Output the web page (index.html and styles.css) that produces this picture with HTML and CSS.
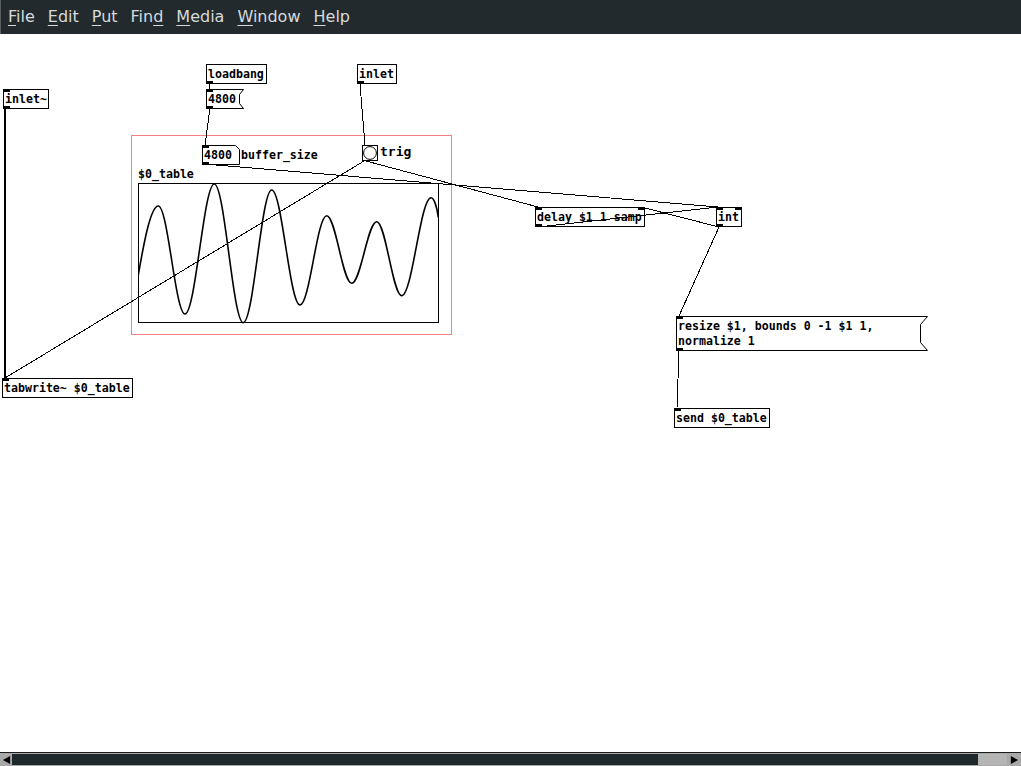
FILE: index.html
```html
<!DOCTYPE html>
<html>
<head>
<meta charset="utf-8">
<title>Pd patch</title>
<link rel="stylesheet" href="styles.css">
</head>
<body>
<div class="window">
  <nav class="menubar">
    <span class="menu"><u>F</u>ile</span>
    <span class="menu"><u>E</u>dit</span>
    <span class="menu"><u>P</u>ut</span>
    <span class="menu">Fin<u>d</u></span>
    <span class="menu"><u>M</u>edia</span>
    <span class="menu"><u>W</u>indow</span>
    <span class="menu"><u>H</u>elp</span>
  </nav>

  <main class="canvas">
    <div class="gop"></div>
    <div class="label l-table">$0_table</div>
    <svg class="graph" viewBox="138 183 301 141">
      <rect x="138.5" y="183.5" width="300" height="139" fill="#fff" stroke="#000" stroke-width="1"/>
      <path d="M138.3,275 C143.5,245 150.5,206 158.3,206 C168,206 175.3,314 185,314 C195.6,314 203.7,184 214.3,184 C224.8,184 232.8,322.7 243.3,322.7 C253.6,322.7 261.4,190 271.7,190 C282,190 289.7,305 300,305 C309.7,305 317,215.7 326.7,215.7 C335.8,215.7 342.6,283.3 351.7,283.3 C360.8,283.3 367.6,221.7 376.7,221.7 C385.8,221.7 392.6,295.7 401.7,295.7 C412.3,295.7 420.4,197.7 431,197.7 C434,197.7 437,207 438.3,217.3" fill="none" stroke="#000" stroke-width="1.6"/>
    </svg>

    <div class="obj n-inletsig">inlet~<i class="io in l"></i><i class="io out l"></i></div>
    <div class="obj n-loadbang">loadbang<i class="io out l"></i></div>
    <div class="obj n-inlet">inlet<i class="io out l"></i></div>

    <div class="shape n-msg4800">
      <svg class="outline" viewBox="0 0 38 20"><polygon points="0.5,0.5 37.5,0.5 33.5,5.5 33.5,14.5 37.5,19.5 0.5,19.5" fill="#fff" stroke="#000" stroke-width="1"/></svg>
      <span class="txt">4800</span><i class="io in l"></i><i class="io out l"></i>
    </div>

    <div class="shape n-num">
      <svg class="outline" viewBox="0 0 38 20"><polygon points="0.5,0.5 33.5,0.5 37.5,4.5 37.5,19.5 0.5,19.5" fill="#fff" stroke="#000" stroke-width="1"/></svg>
      <span class="txt">4800</span><i class="io in l"></i><i class="io out l"></i>
    </div>
    <div class="label l-buffer">buffer_size</div>

    <div class="bang">
      <svg viewBox="0 0 16 16"><circle cx="8" cy="8" r="6.4" fill="#fff" stroke="#000" stroke-width="1"/></svg>
    </div>
    <div class="label l-trig">trig</div>

    <div class="obj n-delay">delay $1 1 samp<i class="io in l"></i><i class="io in r"></i><i class="io out l"></i></div>
    <div class="obj n-int">int<i class="io in l"></i><i class="io in r"></i><i class="io out l"></i></div>

    <div class="shape n-resize">
      <svg class="outline" viewBox="0 0 252 35"><polygon points="0.5,0.5 251.5,0.5 244.5,8.5 244.5,26.5 251.5,34.5 0.5,34.5" fill="#fff" stroke="#000" stroke-width="1"/></svg>
      <span class="txt two">resize $1, bounds 0 -1 $1 1,
normalize 1</span><i class="io in l"></i><i class="io out l"></i>
    </div>

    <div class="obj n-send">send $0_table<i class="io in l"></i></div>
    <div class="obj n-tabwrite">tabwrite~ $0_table<i class="io in l"></i></div>

    <svg class="wires" viewBox="0 34 1021 718">
      <g stroke="#000" stroke-width="1" fill="none" shape-rendering="crispEdges">
        <line x1="209.5" y1="84" x2="209.5" y2="89"/>
        <line x1="210" y1="108" x2="205" y2="145"/>
        <line x1="360" y1="84" x2="365" y2="145"/>
        <line x1="364" y1="161" x2="5" y2="378"/>
        <line x1="366" y1="161" x2="538" y2="207"/>
        <line x1="204" y1="164" x2="718" y2="207"/>
        <line x1="538" y1="227" x2="718" y2="207"/>
        <line x1="719" y1="227" x2="641" y2="207"/>
        <line x1="719" y1="227" x2="679" y2="316"/>
        <line x1="679" y1="350" x2="677" y2="408"/>
      </g>
      <line x1="5" y1="108" x2="5" y2="378" stroke="#000" stroke-width="2" shape-rendering="crispEdges"/>
    </svg>
  </main>

  <div class="hscroll">
    <div class="arrow">
      <svg viewBox="0 0 10 10"><polygon points="1,5 9,0.5 9,9.5" fill="#000"/></svg>
    </div>
    <div class="trough"></div>
    <div class="thumb"></div>
    <div class="arrow right">
      <svg viewBox="0 0 10 10"><polygon points="9,5 1,0.5 1,9.5" fill="#000"/></svg>
    </div>
  </div>
</div>
</body>
</html>
```

FILE: styles.css
```css
* { box-sizing: border-box; }

html, body {
  margin: 0;
  padding: 0;
  background: #fff;
}

body {
  width: 1021px;
  height: 766px;
  overflow: hidden;
}

.window {
  display: grid;
  grid-template-rows: 34px 1fr 14px;
  height: 766px;
}

/* ---------- menu bar ---------- */
.menubar {
  display: flex;
  gap: 13px;
  padding-left: 7px;
  background: #232a2e;
  border-left: 1px solid #596165;
  color: #d6dadd;
  font: 16px/34px "DejaVu Sans", sans-serif;
}

.menu u {
  text-decoration: underline;
  text-underline-offset: 3px;
  text-decoration-thickness: 1px;
}

/* ---------- canvas ---------- */
.canvas {
  position: relative;
  overflow: hidden;
  background: #fff;
}

.obj {
  position: absolute;
  height: 20px;
  border: 1px solid #000;
  background: #fff;
  padding: 0 1px;
  font: bold 11.6px/18px "DejaVu Sans Mono", monospace;
  color: #000;
  white-space: pre;
}

.shape {
  position: absolute;
  height: 20px;
  font: bold 11.6px/18px "DejaVu Sans Mono", monospace;
  color: #000;
}

.shape .outline {
  position: absolute;
  left: 0;
  top: 0;
  width: 100%;
  height: 100%;
}

.shape .txt {
  position: absolute;
  left: 0;
  top: 0;
  padding: 1px 0 0 2px;
  white-space: pre;
}

.shape .txt.two {
  padding-top: 3px;
  line-height: 15px;
}

.io {
  position: absolute;
  width: 7px;
  height: 3px;
  background: #000;
}
.obj .io.in { top: -1px; }
.obj .io.out { bottom: -1px; }
.obj .io.l { left: -1px; }
.obj .io.r { right: -1px; }
.shape .io.in { top: 0; }
.shape .io.out { bottom: 0; }
.shape .io.l { left: 0; }

.label {
  position: absolute;
  font: bold 11.6px/16px "DejaVu Sans Mono", monospace;
  color: #000;
  white-space: pre;
}

.gop {
  position: absolute;
  left: 131px;
  top: 101px;
  width: 321px;
  height: 200px;
  border: 1px solid #f28282;
}

.graph {
  position: absolute;
  left: 138px;
  top: 149px;
  width: 301px;
  height: 141px;
}

.bang {
  position: absolute;
  left: 362px;
  top: 111px;
  width: 16px;
  height: 16px;
  border: 1px solid #000;
  background: #fff;
}
.bang svg {
  position: absolute;
  left: -1px;
  top: -1px;
  width: 16px;
  height: 16px;
}

.wires {
  position: absolute;
  left: 0;
  top: 0;
  width: 1021px;
  height: 718px;
  pointer-events: none;
}

/* node placement on the patch canvas (canvas origin = page y 34) */
.n-inletsig { left: 3px;   top: 55px;  width: 46px; }
.n-loadbang { left: 206px; top: 30px;  width: 61px; }
.n-inlet    { left: 357px; top: 30px;  width: 40px; }
.n-msg4800  { left: 206px; top: 55px;  width: 38px; }
.n-num      { left: 202px; top: 111px; width: 38px; }
.n-delay    { left: 535px; top: 173px; width: 110px; }
.n-int      { left: 716px; top: 173px; width: 26px; }
.n-resize   { left: 676px; top: 282px; width: 252px; height: 35px; }
.n-send     { left: 674px; top: 374px; width: 96px; }
.n-tabwrite { left: 2px;   top: 344px; width: 131px; }

.l-table  { left: 138px; top: 132px; }
.l-buffer { left: 241px; top: 113px; }
.l-trig   { left: 380px; top: 110px; font-size: 13px; }

/* ---------- horizontal scrollbar ---------- */
.hscroll {
  display: flex;
  border-top: 1px solid #1b1b1b;
  background: #a9a9a9;
  padding: 1px 0;
}

.arrow {
  width: 12px;
  display: flex;
  align-items: center;
  justify-content: center;
}
.arrow.right { width: 14px; }
.arrow svg {
  width: 9px;
  height: 10px;
}

.trough {
  flex: 1;
  background: #1f292d;
}

.thumb {
  width: 29px;
  background: #b5b5b5;
}
```
